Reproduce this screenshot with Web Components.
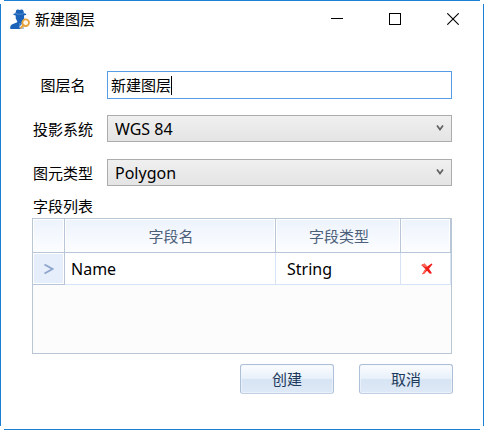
<!DOCTYPE html>
<html lang="zh-CN">
<head>
<meta charset="utf-8">
<title>新建图层</title>
<style>
html, body { height: 100%; }
body { margin: 0; background: #fff; color: #000; font: 15px/20px "Noto Sans", "Noto Sans CJK SC", sans-serif; }
</style>
</head>
<body>
<dialog-window>
  <title-bar slot="title">新建图层</title-bar>
  <text-field label="图层名" value="新建图层"></text-field>
  <drop-down label="投影系统" value="WGS 84"></drop-down>
  <drop-down label="图元类型" value="Polygon"></drop-down>
  <field-list label="字段列表"></field-list>
  <push-button slot="actions">创建</push-button>
  <push-button slot="actions">取消</push-button>
</dialog-window>

<script>
const define = (name, css, html) => customElements.define(name, class extends HTMLElement {
  constructor() {
    super();
    this.attachShadow({ mode: "open" });
  }
  connectedCallback() {
    const attr = key => this.getAttribute(key) || "";
    this.shadowRoot.innerHTML = `<style>*{box-sizing:border-box}${css}</style>${html(attr)}`;
  }
});

const rowCss = `
  :host { display: grid; grid-template-columns: 62px 1fr; column-gap: 13px; align-items: center; }
  label { text-align: center; white-space: nowrap; }`;

define("dialog-window", `
  :host { display: flex; flex-direction: column; min-height: 100%; box-sizing: border-box; padding: 1px;
    --c: #1c80d2;
    background:
      linear-gradient(var(--c), var(--c)) center top / calc(100% - 8px) 1px no-repeat,
      linear-gradient(var(--c), var(--c)) center bottom / calc(100% - 8px) 1px no-repeat,
      linear-gradient(var(--c), var(--c)) left center / 1px calc(100% - 8px) no-repeat,
      linear-gradient(var(--c), var(--c)) right center / 1px calc(100% - 8px) no-repeat,
      #fff; }
  main { flex: 1; display: flex; flex-direction: column; gap: 16px; padding: 34px 31px 10px; }
  footer { display: flex; justify-content: flex-end; gap: 25px; padding: 0 30px 35px; }
`, () => `<slot name="title"></slot><main><slot></slot></main><footer><slot name="actions"></slot></footer>`);

define("title-bar", `
  :host { display: flex; align-items: center; height: 36px; padding: 0 1px 0 9px; }
  .logo { width: 20px; height: 20px; margin-right: 5px; flex: none; }
  h1 { flex: 1; margin: 0; font: inherit; }
  button { width: 58px; height: 36px; padding: 0; border: 0; background: none; display: grid; place-items: center; }
`, () => `
  <svg class="logo" viewBox="0 0 20 20" aria-hidden="true">
    <path fill="#1a63b8" d="M6.2 1.2Q7 .2 8.2.5l1.6.5L11.5.5Q12.7.3 13.2 1.3L14 4.2q2.400.4 2.400 1.100 0 .8-2.400 1.200v1.800q.5.2.2 1.300l-.8 1.200q-.6 2-1.800 2.800l.2.900 3 1.200-1 3.300-1 1H1q-1 0-.9-1.200.2-2.400 1.700-3.200l5.400-2.300v-1.300q-.7-.8-.9-1.600-.8-.9-.6-2.100V6.500Q3.200 6.200 3.200 5.300q0-.8 2.200-1.100z"/>
    <path fill="#fff" d="M5.600 4.300q4.200 1 8.200 0v.7q-4 1-8.200 0zM9 14.200h1.700l-.4 1.300.5 3-1 .8-.9-.8.600-3z" opacity=".35"/>
    <path d="M13.600 15.800 11.600 18" stroke="#fff" stroke-width="3.500" stroke-linecap="round"/>
    <circle cx="15.700" cy="13.700" r="3.300" fill="#fff8e8" stroke="#e6a13d" stroke-width="1.800"/>
    <path d="M13.400 16.200 11 18.800" stroke="#e6a13d" stroke-width="2" stroke-linecap="round"/>
  </svg>
  <h1><slot></slot></h1>
  <button aria-label="最小化"><svg width="12" height="12" shape-rendering="crispEdges"><path d="M0 5.500h12" stroke="#000"/></svg></button>
  <button aria-label="最大化"><svg width="12" height="12" shape-rendering="crispEdges"><path d="M.5.500h11v11H.5z" fill="none" stroke="#000"/></svg></button>
  <button aria-label="关闭"><svg width="12" height="12"><path d="M.3.300 11.700 11.700M11.700.300.300 11.700" stroke="#000" stroke-width="1.100"/></svg></button>`);

define("text-field", `${rowCss}
  .box { display: flex; align-items: center; height: 28px; padding-left: 3px; border: 1px solid #569de5; background: #fff; }
  input { field-sizing: content; padding: 0; border: 0; outline: 0; background: none; font: inherit; color: inherit; }
  .caret { width: 1px; height: 19px; background: #000; }
`, a => `<label for="f">${a("label")}</label><div class="box"><input id="f" value="${a("value")}"><span class="caret"></span></div>`);

define("drop-down", `${rowCss}
  :host { padding-bottom: 1px; }
  .box { display: grid; align-items: center; }
  select, svg { grid-area: 1 / 1; }
  select { appearance: none; width: 100%; height: 27px; margin: 0; padding: 0 24px 0 7px; border: 1px solid #acacac; border-radius: 0;
    background: linear-gradient(#f0f0f0, #e4e4e4); font: inherit; font-size: 16px; color: inherit; }
  svg { justify-self: end; margin: 0 8px 2px 0; pointer-events: none; }
`, a => `<label for="f">${a("label")}</label><div class="box"><select id="f"><option>${a("value")}</option></select>
  <svg width="8" height="8" aria-hidden="true"><path d="M1 1.500 4 5.500 7 1.500" fill="none" stroke="#606060" stroke-width="1.700"/></svg></div>`);

define("field-list", `
  :host { display: flex; flex-direction: column; flex: 1; margin-top: -7px; }
  h2 { margin: 0 0 2px 1px; font: inherit; }
  .frame { flex: 1; border: 1px solid #b9c6d4; background: #fcfcfc; min-height: 136px; }
  table { width: 100%; border-collapse: separate; border-spacing: 0; table-layout: fixed; }
  .mark { width: 32px; } .type { width: 125px; } .del { width: 50px; }
  th, td { padding: 0; font-weight: 400; border-right: 1px solid #d5e3f5; border-bottom: 1px solid #d5e3f5; }
  thead th { height: 34px; padding-left: 2px; color: #4c607a; border-color: #b9c5d8; background: linear-gradient(#edf3fc, #fcfdff); box-shadow: inset 1px 1px #fff, inset -1px 0 #fff; }
  tbody td { height: 32px; background: #fff; text-align: left; font-size: 16px; }
  tbody th { border-color: #b9c5d8; background: #e6eefb; box-shadow: inset 1px 1px #fff, inset -1px -1px #fff; }
  svg { display: block; margin: auto; }
  .name { padding-left: 6px; } .kind { padding-left: 11px; }
  .act { padding-left: 3px; }
  button { display: block; margin: auto; padding: 0; border: 0; background: none; }
`, a => `<h2 id="t">${a("label")}</h2><div class="frame"><table aria-labelledby="t">
  <colgroup><col class="mark"><col><col class="type"><col class="del"></colgroup>
  <thead><tr><th></th><th scope="col">字段名</th><th scope="col">字段类型</th><th></th></tr></thead>
  <tbody><tr>
    <th><svg width="10" height="12" aria-hidden="true"><path d="M.5 1.500 8.500 6 .5 10.500" fill="none" stroke="#8fa6cc" stroke-width="2"/></svg></th>
    <td class="name">Name</td><td class="kind">String</td>
    <td class="act"><button aria-label="删除"><svg width="12" height="12"><path d="M.3 2 3.500.600l2.700 3L10.500.500l1 .7L8 5.800l3 4.400-2.200.5L6 7.800 3.300 10.800 1 11.200 4.300 6z" fill="#f01c18"/><path d="M.3 2 3.500.600l2.700 3L5 4.500zM1 11.200 4.300 6l1 .7L3 10.800z" fill="#ff6a5c"/></svg></button></td>
  </tr></tbody></table></div>`);

define("push-button", `
  :host { display: block; }
  button { width: 94px; height: 30px; padding: 0 0 1px; border: 1px solid #aebfd8; border-bottom-color: #c2d0e4; border-radius: 3px;
    background: linear-gradient(#fbfdff, #e8f0fa 48%, #d7e4f3 52%, #dfe9f7); box-shadow: inset 0 0 0 1px #f1f6fd99; color: #1e395b; font: inherit; }
`, () => `<button><slot></slot></button>`);
</script>
</body>
</html>
